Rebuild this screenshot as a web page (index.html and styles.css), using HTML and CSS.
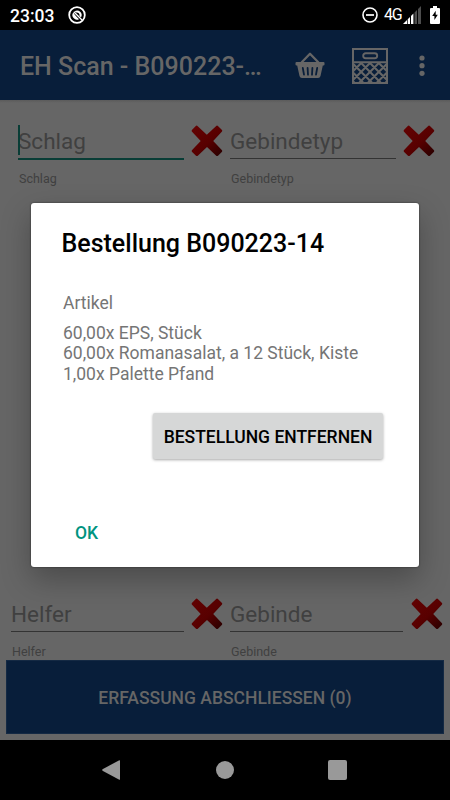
FILE: index.html
```html
<!DOCTYPE html>
<html lang="de">
<head>
<meta charset="utf-8">
<title>EH Scan</title>
<link rel="stylesheet" href="styles.css">
</head>
<body>
<svg class="defs" width="0" height="0" aria-hidden="true">
  <defs>
    <linearGradient id="red" x1="0" y1="0" x2="1" y2="1"><stop offset="0" stop-color="#640303"/><stop offset=".55" stop-color="#580000"/><stop offset="1" stop-color="#260000"/></linearGradient>
    <symbol id="cross" viewBox="0 0 32 32"><path d="M6.2 .8 15.8 9.8 25.5 .8Q26.2 .3 26.9 .9L31 5.1Q31.5 6 31 6.6L22.2 16 31 25.3Q31.5 26 31 26.8L27 30.7Q26 31.3 25.2 30.7L16 22.1 6.8 30.7Q6 31.3 5 30.7L.9 26.8Q.4 26 .9 25.2L9.7 16 .8 6.5Q.4 5.8 .9 5.1L4.8 .9Q5.5 .3 6.2 .8Z" fill="url(#red)"/></symbol>
  </defs>
</svg>
<div class="screen">
  <header class="status">
    <span class="clock">23:03</span>
    <svg class="notice" width="18" height="18" viewBox="0 0 18 18"><circle cx="9" cy="9" r="7.8" fill="none" stroke="#fff" stroke-width="1.8"/><path d="M5.2 6.5A4.6 4.6 0 0 0 11 13.2zM6.6 5.2A4.6 4.6 0 0 1 13 11.4L11.5 10A2.8 2.8 0 0 0 8 6.6z" fill="#fff"/><path d="M7 8.3 10.2 11.7" stroke="#000" stroke-width="1"/><path d="M5.8 5.8 14 14" stroke="#fff" stroke-width="1.3"/></svg>
    <svg class="dnd" width="16" height="16" viewBox="0 0 16 16"><circle cx="8" cy="8" r="7" fill="none" stroke="#fff" stroke-width="1.6"/><path d="M4 8h8" stroke="#fff" stroke-width="1.7"/></svg>
    <span class="network">4G</span>
    <svg class="signal" width="18" height="18" viewBox="0 0 18 18"><path d="M0 18 4 14v4zM4.7 13.3 7 11v7H4.7zM8 10l2.4-2.4V18H8z" fill="#fff"/><path d="M11.5 6.5 14 4v14h-2.5zM15 3l3-3v18h-3z" fill="#4d4d4d"/></svg>
    <svg class="battery" width="10" height="18" viewBox="0 0 10 18"><path d="M3 0h4v2h2q1 0 1 1v14q0 1-1 1H1q-1 0-1-1V3q0-1 1-1h2z" fill="#fff"/><path d="M5.7 4.8 2.2 10h2.2v4L7.8 8.8H5.7z" fill="#000"/></svg>
  </header>

  <div class="toolbar">
    <h1 class="app-title">EH Scan - B090223-…</h1>
    <svg class="basket" width="30" height="28" viewBox="0 0 30 28"><path d="M6.5 11.5 15 2.8l8.5 8.7" fill="none" stroke="#666" stroke-width="2.3" stroke-linejoin="round"/><path d="M1.5 11h27q1 0 1 1v1.6q0 1-1 1h-.7L25.5 25Q25 27 23 27H7Q5 27 4.5 25L2.2 14.6h-.7q-1 0-1-1V12q0-1 1-1z" fill="#666"/><path d="M7.8 17 9 23.7M12.6 17l.4 6.7M17.4 17l-.4 6.7M22.2 17 21 23.7" stroke="#081e3a" stroke-width="1.8" stroke-linecap="round"/></svg>
    <svg class="crate" width="36" height="36" viewBox="0 0 36 36"><g fill="none" stroke="#666"><rect x="1" y="1" width="34" height="34" stroke-width="2"/><path d="M1 14.3h34" stroke-width="2"/><rect x="11.2" y="5.2" width="14" height="5" rx="2.5" stroke-width="1.9"/><path d="M1 23.3 9.5 14.8M1 32.1 18.3 14.8M7 35 27.1 14.8M15.7 35 35 15.7M24.5 35 35 24.5M33.3 35 35 33.3M35 23.3 26.5 14.8M35 32.1 17.7 14.8M29 35 8.9 14.8M20.3 35 1 15.7M11.5 35 1 24.5M2.7 35 1 33.3" stroke-width="2.1"/></g></svg>
    <svg class="more" width="6" height="22" viewBox="0 0 6 22" fill="#666"><circle cx="3" cy="3" r="2.6"/><circle cx="3" cy="10.7" r="2.6"/><circle cx="3" cy="18.3" r="2.6"/></svg>
  </div>

  <main class="content">
    <div class="row row-top">
      <div class="field focused"><div class="input">Schlag</div><div class="label">Schlag</div></div>
      <svg class="cross"><use href="#cross"/></svg>
      <div class="field"><div class="input">Gebindetyp</div><div class="label">Gebindetyp</div></div>
      <svg class="cross"><use href="#cross"/></svg>
    </div>
    <div class="row row-bottom">
      <div class="field"><div class="input">Helfer</div><div class="label">Helfer</div></div>
      <svg class="cross"><use href="#cross"/></svg>
      <div class="field"><div class="input">Gebinde</div><div class="label">Gebinde</div></div>
      <svg class="cross"><use href="#cross"/></svg>
    </div>
    <div class="finish"><span>ERFASSUNG ABSCHLIESSEN (0)</span></div>
  </main>

  <nav class="nav">
    <svg width="18" height="20" viewBox="0 0 18 20"><path d="M17.3.2Q18 0 18 .8v18.4q0 .8-.7.6L.5 10.7Q0 10 .5 9.3z" fill="#999"/></svg>
    <span class="home"></span>
    <span class="recent"></span>
  </nav>

  <section class="dialog">
    <h2 class="dialog-title">Bestellung B090223-14</h2>
    <div class="caption">Artikel</div>
    <div class="items">60,00x EPS, Stück<br>60,00x Romanasalat, a 12 Stück, Kiste<br>1,00x Palette Pfand</div>
    <div class="remove"><span>BESTELLUNG ENTFERNEN</span></div>
    <div class="ok">OK</div>
  </section>
</div>
</body>
</html>
```
FILE: styles.css
```css
* { box-sizing: border-box; }
body { margin: 0; background: #000; font-family: Roboto, sans-serif; }
h1, h2 { margin: 0; }
svg { display: block; flex: none; }
.defs { position: absolute; }
.screen { position: relative; width: 450px; height: 800px; overflow: hidden; display: flex; flex-direction: column; }

.status { height: 30px; flex: none; display: flex; align-items: center; padding: 0 10px; background: #000; color: #fff; }
.clock { width: 58px; font-size: 17.5px; font-weight: 500; line-height: 30px; padding-top: 2px; }
.dnd { margin-left: auto; margin-right: 6px; }
.network { width: 18px; font-size: 16px; line-height: 30px; letter-spacing: -1.2px; white-space: nowrap; }
.signal { margin-left: 1px; margin-right: 9px; }

.toolbar { height: 70px; flex: none; display: flex; align-items: center; padding: 0 24px 0 20px; background: #081e3a; color: #666; }
.app-title { width: 275px; font-size: 25px; font-weight: 500; line-height: 30px; padding-top: 3px; white-space: nowrap; }
.basket { margin-right: 27px; }
.crate { margin-right: 31px; }
.crate, .more { margin-top: 1px; }

.content { height: 640px; flex: none; display: flex; flex-direction: column; background: linear-gradient(#5b5b5b, #666 3px); }
.row { display: flex; align-items: flex-start; color: #404040; }
.row-top { padding: 24px 0 0 18px; height: 473px; }
.row-bottom { padding: 24px 0 0 11px; height: 87px; }
.field { width: 166px; }
.row-bottom .field { width: 173px; }
.row-bottom .cross:last-child { margin-left: 7.5px; }
.input { height: 35px; border-bottom: 1px solid #333; font-size: 22.5px; line-height: 34px; white-space: nowrap; }
.focused .input { height: 36px; border-bottom: 2px solid #093d36; position: relative; }
.focused .input::before { content: ""; position: absolute; left: 0; top: 1px; width: 2px; height: 30px; background: #093d36; }
.label { font-size: 12.5px; line-height: 16px; padding: 12px 0 0 1px; }
.focused .label { padding-top: 11px; }
.cross { width: 32px; height: 32px; margin: 1px 7px 0; }
.finish { width: 438px; height: 74px; margin: 0 6px; display: flex; align-items: center; justify-content: center; background: #081e3a; border: 1px solid #142943; color: #666; font-size: 17.5px; font-weight: 500; padding-top: 2px; }

.nav { height: 60px; flex: none; display: flex; align-items: center; background: #000; padding-left: 102px; }
.home { width: 18px; height: 18px; border-radius: 50%; background: #999; margin-left: 96px; }
.recent { width: 19px; height: 20px; border-radius: 2px; background: #999; margin-left: 94px; }

.dialog { position: absolute; left: 31px; top: 203px; width: 388px; height: 364px; padding: 26px 30.5px 0; background: #fff; border-radius: 3px; box-shadow: 0 0 2px rgba(0,0,0,.6), 0 12px 30px rgba(0,0,0,.28); color: #757575; }
.dialog-title { font-size: 25px; font-weight: 500; line-height: 30px; color: #000; white-space: nowrap; }
.caption { padding-left: 1.5px; margin-top: 34px; font-size: 17.5px; line-height: 20.5px; }
.items { padding-left: 1.5px; margin-top: 9px; font-size: 17.5px; line-height: 20.5px; white-space: nowrap; }
.remove { width: 230px; height: 46px; margin: 29px 0 0 91.5px; display: flex; align-items: center; justify-content: center; border-radius: 2px; background: #d6d7d7; box-shadow: 0 1px 3px rgba(0,0,0,.35); color: #000; font-size: 17.5px; font-weight: 500; white-space: nowrap; padding-top: 1px; }
.ok { margin: 63px 0 0 13.5px; font-size: 17.5px; font-weight: 500; line-height: 22px; color: #009480; }
```
